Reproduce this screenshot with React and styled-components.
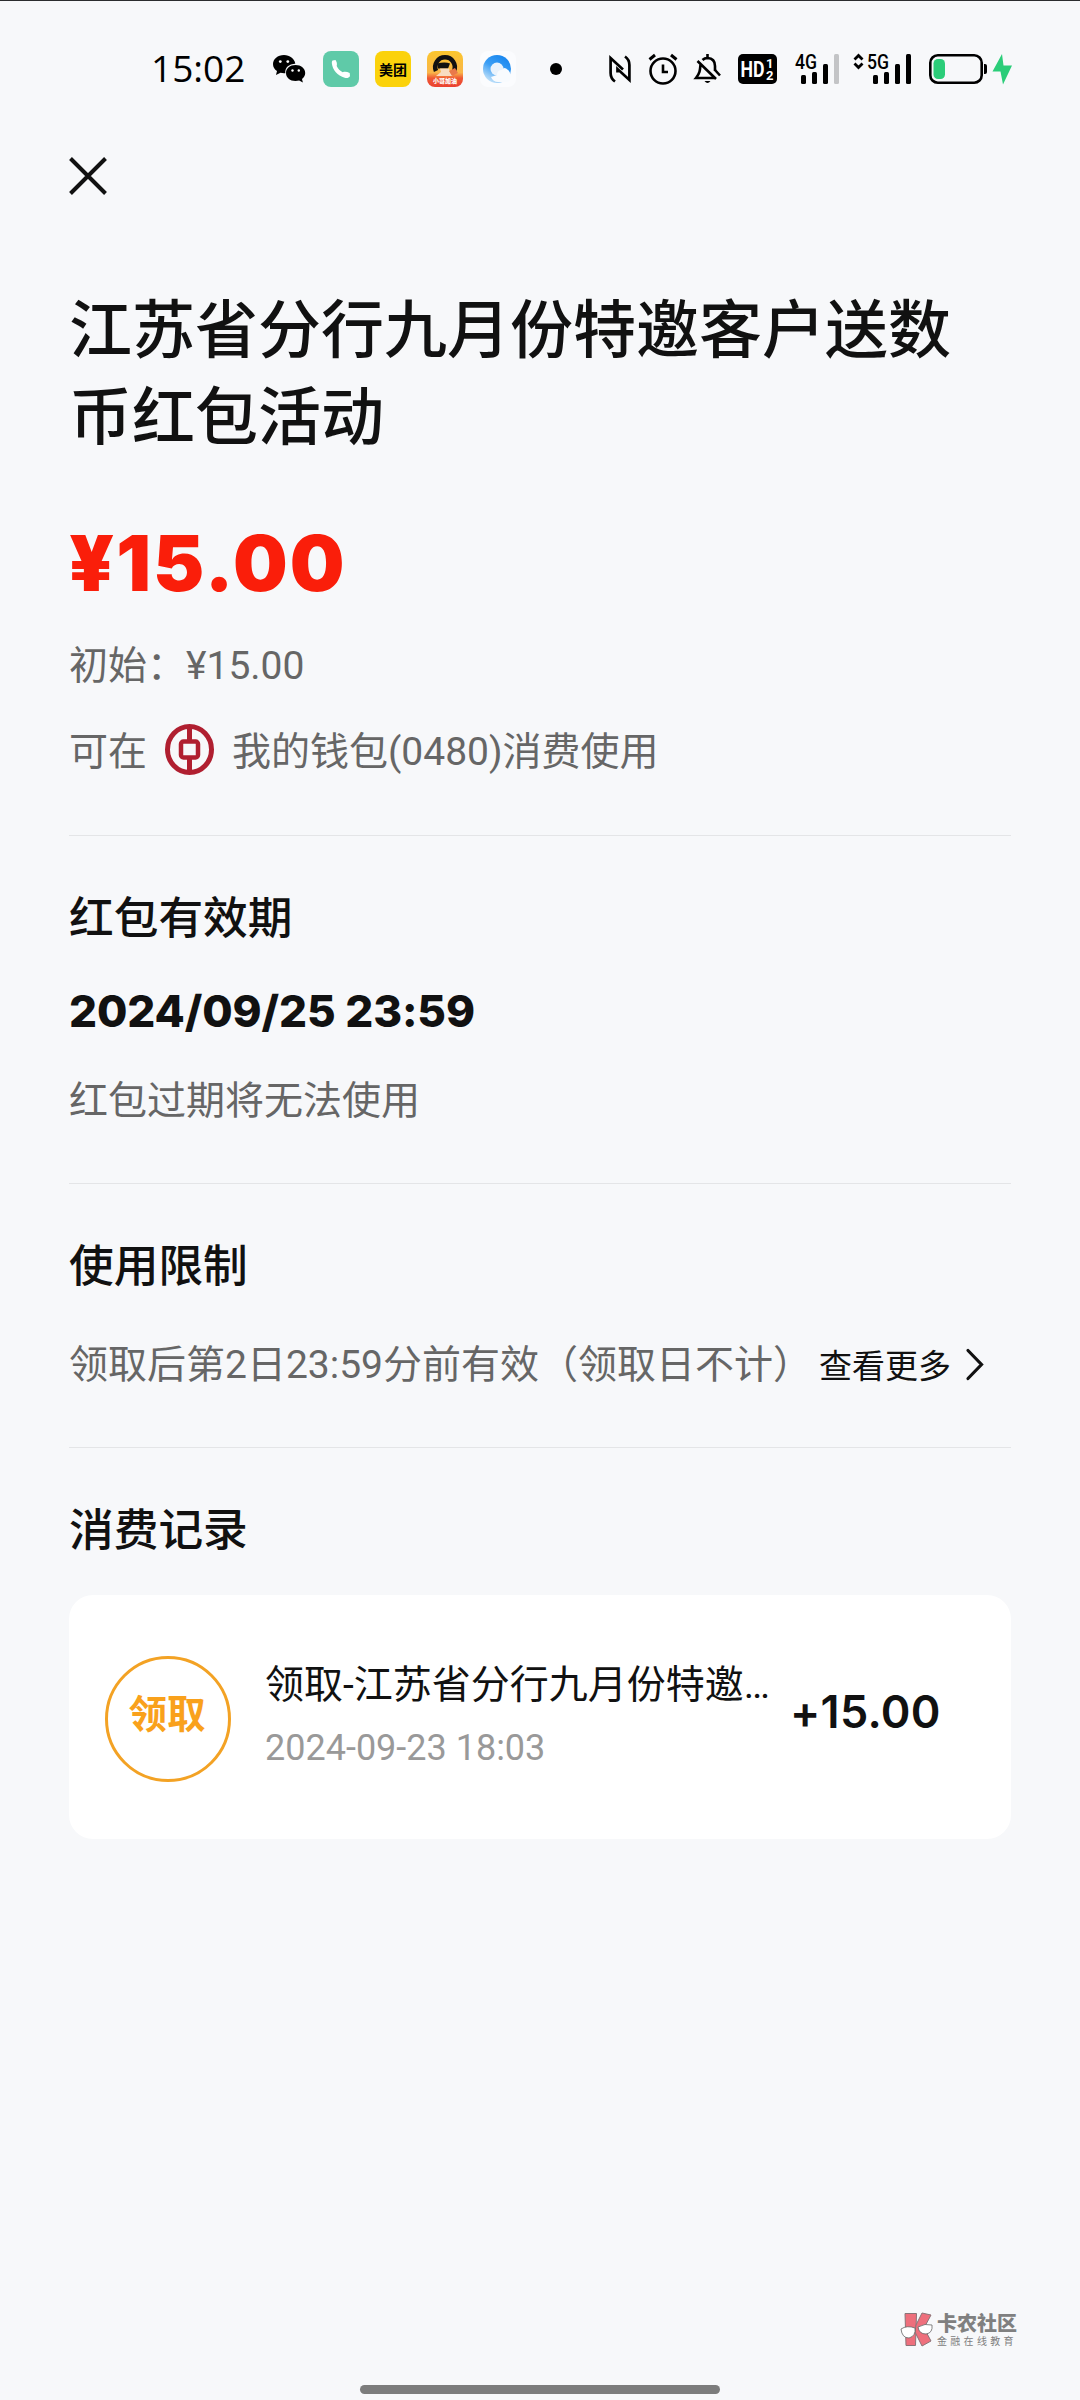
import styled, { createGlobalStyle } from 'styled-components';

const records = [
  {
    id: 1,
    tag: '领取',
    title: '领取-江苏省分行九月份特邀…',
    time: '2024-09-23 18:03',
    amount: '+15.00',
  },
];

const WechatIcon = () => (
  <Icon $left={26} width="34" height="30" viewBox="0 0 34 30">
    <path
      d="M12 1C5.600 1 1 5 1 10c0 3 1.500 5.400 4 7l-1 4 4.500-2.200c1.500.4 3 .5 4.800.4A9.500 8.500 0 0 1 23.300 9.700C22.500 4.600 17.800 1 12 1z"
      fill="#000"
    />
    <path
      d="M23.500 11C18 11 14 14.500 14 19s4 8 9.500 8c1.300 0 2.500-.2 3.600-.5l3.800 2-.9-3.600c2-1.400 3.200-3.500 3.200-5.900 0-4.500-4.200-8-9.700-8z"
      fill="#000"
    />
    <circle cx="8.300" cy="7.600" r="1.400" fill="#fff" />
    <circle cx="15.800" cy="7.600" r="1.400" fill="#fff" />
    <circle cx="20.500" cy="16.500" r="1.200" fill="#fff" />
    <circle cx="26.800" cy="16.500" r="1.200" fill="#fff" />
  </Icon>
);

const PhoneIcon = () => (
  <svg width="20" height="20" viewBox="0 0 20 20">
    <path
      d="M1.500 1.500 4.500 1c1.300 1.800 1.800 3.800 1.200 6 1.300 2.800 3.300 4.900 6 6.300 2-.8 4.200-.6 7 .7l.3 3c-1 2-3.200 2.500-5.300 1.800C6.500 16.500 1.500 11 .8 4c0-1.200.2-2 .7-2.500z"
      fill="#fff"
    />
  </svg>
);

const CourierIcon = () => (
  <Icon $left={16} width="36" height="36" viewBox="0 0 36 36">
    <defs>
      <linearGradient id="courier" x1="0" y1="0" x2="0" y2="1">
        <stop offset="0" stopColor="#fbc62c" />
        <stop offset="0.6" stopColor="#f9b54a" />
        <stop offset="0.75" stopColor="#ef5a34" />
        <stop offset="1" stopColor="#ea4030" />
      </linearGradient>
    </defs>
    <rect width="36" height="36" rx="8" fill="url(#courier)" />
    <path d="M9 20A9.800 9.800 0 1 1 27 20" fill="none" stroke="#111" strokeWidth="4.500" />
    <path d="M10 12.500q8-2 13 0l-2 5H11z" fill="#111" />
    <path d="M13 17.500h9l1 4 3 3.500H9l5-4z" fill="#f8dcc0" />
    <path d="m22 20 6-3 3 5-6 3z" fill="#e9794a" />
    <text x="18" y="32" fontSize="6" fontWeight="900" textAnchor="middle" fill="#fff">
      小哥加油
    </text>
  </Icon>
);

const BrowserIcon = () => (
  <Icon $left={17} width="36" height="36" viewBox="0 0 36 36">
    <defs>
      <linearGradient id="ring" x1="0.8" y1="0" x2="0.2" y2="1">
        <stop offset="0" stopColor="#1584ee" />
        <stop offset="0.5" stopColor="#3c9ff5" />
        <stop offset="1" stopColor="#d3eafa" />
      </linearGradient>
    </defs>
    <rect width="36" height="36" rx="8" fill="#fbfcfe" />
    <circle cx="17" cy="18" r="14" fill="url(#ring)" />
    <circle cx="17" cy="18" r="6.500" fill="#eaf3fc" />
    <path d="M17 24q0-5 5-5 2-4 6 0 3 2 2.500 7 0 5-4 5H18q-5 0-7-5z" fill="#f8fbfe" />
  </Icon>
);

const NfcIcon = () => (
  <Icon $left={47} width="22" height="28" viewBox="0 0 22 28" fill="none" stroke="#000" strokeWidth="2.700">
    <path d="M6 26.500Q1.600 23.500 1.600 18V3L14 14.500" />
    <path d="M16 1.500q4.400 3 4.400 8.500v15L8.500 14v3.500" />
  </Icon>
);

const AlarmIcon = () => (
  <Icon $left={17} width="30" height="32" viewBox="0 0 30 32" fill="none" stroke="#000" strokeWidth="2.600">
    <circle cx="15" cy="18" r="12.500" />
    <path d="M15 11.500V19h5" />
    <path d="m1.500 6.500 5.500-4.500M28.500 6.500 23 2" strokeWidth="3" />
  </Icon>
);

const MutedIcon = () => (
  <Icon $left={16} width="27" height="30" viewBox="0 0 27 30" fill="none" stroke="#000" strokeWidth="2.600">
    <path d="M8.500 6Q10.500 4 13.500 4q7.500.5 7.500 8v5M6.500 10.500c-.5 5.500-.5 8.500-4.500 13.500h18M3.500 7 22 25M13.500 0v4" />
    <path d="M10.500 27h6q-3 4-6 0z" fill="#000" stroke="none" />
    <path d="m21 16 5 5.500" />
  </Icon>
);

const HdIcon = () => (
  <Icon $left={17} width="39" height="30" viewBox="0 0 39 30">
    <rect width="39" height="30" rx="5" fill="#000" />
    <g fill="#fff" fontFamily="Roboto" fontWeight="700">
      <text x="2.500" y="22.500" fontSize="21.500" textLength="24" lengthAdjust="spacingAndGlyphs">
        HD
      </text>
      <text x="28" y="14" fontSize="13">
        1
      </text>
      <text x="28" y="25.500" fontSize="13">
        2
      </text>
    </g>
  </Icon>
);

const bars = [
  { x: 0, y: 21 },
  { x: 11, y: 18 },
  { x: 22, y: 10 },
  { x: 33, y: 0 },
];

const Signal = ({ label, strength, updown, left }) => (
  <Icon $left={left} width={updown ? 57 : 46} height="30" viewBox={updown ? '-19 0 57 30' : '-8 0 46 30'}>
    {updown && (
      <path
        d="m-18.500 5.500 4-4 4 4M-18.500 9.500l4 4 4-4"
        fill="none"
        stroke="#000"
        strokeWidth="2.800"
      />
    )}
    <text
      x="-6"
      y="14.500"
      fontSize="20"
      fontFamily="Roboto"
      fontWeight="500"
      textLength="22"
      lengthAdjust="spacingAndGlyphs"
    >
      {label}
    </text>
    {bars.map(({ x, y }, i) => (
      <rect
        key={x}
        x={x}
        y={y}
        width="5"
        height={30 - y}
        rx="1.500"
        fill={i < strength ? '#000' : '#c3c4c6'}
      />
    ))}
  </Icon>
);

const BatteryIcon = () => (
  <Icon $left={18} width="84" height="32" viewBox="0 0 84 32">
    <rect x="1.300" y="2.300" width="51.400" height="27.400" rx="7.500" fill="none" stroke="#000" strokeWidth="2.600" />
    <rect x="4.500" y="6" width="11.500" height="20" rx="4.500" fill="#2bcd79" />
    <path d="M55 11h1q2 0 2 2v6q0 2-2 2h-1z" />
    <path d="M73 1 63.500 18.500h8L74 31.500 83 12.500h-8.500z" fill="#2bcd79" />
  </Icon>
);

const BankLogo = () => (
  <svg width="49" height="51" viewBox="0 0 49 51" fill="none" stroke="#b01f30">
    <ellipse cx="24.500" cy="25.500" rx="22" ry="23" strokeWidth="5" />
    <rect x="16" y="17.500" width="17" height="16" rx="2.500" strokeWidth="4.500" />
    <path d="M24.500 4v13M24.500 34v13" strokeWidth="5" />
  </svg>
);

const CommunityLogo = () => (
  <svg width="34" height="36" viewBox="0 0 34 36">
    <g fill="#ee6f7c" stroke="#8b7478" strokeWidth="1">
      <path d="M5 1.500h11.500l-1 32H6z" />
      <path d="m22 1 9 2-7 13 7 13-9 5-7-14 1-7z" />
    </g>
    <g fill="#fff" stroke="#666" strokeWidth="0.800">
      <path d="M1 17q6-4 14-1 1 8-6 10-7 0-8-9z" />
      <path d="M18 15q7-4 14-2 1 8-6 9-7 0-8-7z" />
    </g>
  </svg>
);

const App = () => {
  return (
    <>
      <GlobalStyle />
      <Page>
        <StatusBar>
          <Clock>15:02</Clock>
          <WechatIcon />
          <AppTile $left={17} $color="#5fcaa8">
            <PhoneIcon />
          </AppTile>
          <AppTile $left={16} $color="#fbd20b">
            美团
          </AppTile>
          <CourierIcon />
          <BrowserIcon />
          <Dot />
          <NfcIcon />
          <AlarmIcon />
          <MutedIcon />
          <HdIcon />
          <Signal label="4G" strength={3} left={16} />
          <Signal label="5G" strength={4} left={15} updown />
          <BatteryIcon />
        </StatusBar>

        <Content>
          <CloseButton aria-label="关闭">
            <svg width="38" height="38" viewBox="0 0 38 38">
              <path d="m1.500 1.500 35 35M36.500 1.500l-35 35" stroke="#111" strokeWidth="4" />
            </svg>
          </CloseButton>

          <Title>江苏省分行九月份特邀客户送数币红包活动</Title>
          <Amount>¥15.00</Amount>
          <Text>初始：¥15.00</Text>
          <WalletRow>
            可在
            <BankLogo />
            我的钱包(0480)消费使用
          </WalletRow>

          <Section $height={348}>
            <Heading>红包有效期</Heading>
            <Expiry>2024/09/25 23:59</Expiry>
            <Text>红包过期将无法使用</Text>
          </Section>

          <Section $height={264}>
            <Heading>使用限制</Heading>
            <LimitRow>
              <Text>领取后第2日23:59分前有效（领取日不计）</Text>
              <MoreLink>
                <span>查看更多</span>
                <svg width="20" height="34" viewBox="0 0 20 34">
                  <path d="m3 2.500 13.500 14L3 30.500" fill="none" stroke="#111" strokeWidth="3.200" strokeLinecap="round" />
                </svg>
              </MoreLink>
            </LimitRow>
          </Section>

          <Section>
            <Heading>消费记录</Heading>
            {records.map(({ id, tag, title, time, amount }) => (
              <Record key={id}>
                <Badge>{tag}</Badge>
                <RecordInfo>
                  <RecordTitle>{title}</RecordTitle>
                  <RecordTime>{time}</RecordTime>
                </RecordInfo>
                <RecordAmount>{amount}</RecordAmount>
              </Record>
            ))}
          </Section>
        </Content>

        <Watermark>
          <CommunityLogo />
          <div>
            <BrandName>卡农社区</BrandName>
            <BrandSlogan>金融在线教育</BrandSlogan>
          </div>
        </Watermark>
        <HomeIndicator />
      </Page>
    </>
  );
};

export default App;

const GlobalStyle = createGlobalStyle`
  * {
    box-sizing: border-box;
  }

  body {
    margin: 0;
    background: #f7f8fa;
  }
`;

const Page = styled.div`
  display: flex;
  flex-direction: column;
  width: 1080px;
  height: 2400px;
  border-top: 1px solid #2b2c2e;
  overflow: hidden;
  background: #f7f8fa;
  color: #111;
  font-family: Roboto, 'Noto Sans CJK SC', sans-serif;
`;

const StatusBar = styled.div`
  display: flex;
  align-items: center;
  height: 135px;
  padding-left: 151px;
`;

const Icon = styled.svg`
  flex: none;
  margin-left: ${({ $left }) => $left}px;
  overflow: visible;
`;

const Clock = styled.div`
  width: 95px;
  padding-bottom: 2px;
  color: #000;
  font-family: 'Open Sans', sans-serif;
  font-size: 37px;
  line-height: 40px;
`;

const AppTile = styled.div`
  display: flex;
  flex: none;
  align-items: center;
  justify-content: center;
  width: 36px;
  height: 36px;
  margin-left: ${({ $left }) => $left}px;
  border-radius: 8px;
  background: ${({ $color }) => $color};
  color: #000;
  font-size: 14px;
  font-weight: 700;
`;

const Dot = styled.div`
  width: 12px;
  height: 12px;
  margin-left: 34px;
  border-radius: 50%;
  background: #000;
`;

const Content = styled.main`
  display: flex;
  flex: 1;
  flex-direction: column;
  padding: 0 69px;
`;

const CloseButton = styled.button`
  display: flex;
  width: 38px;
  height: 38px;
  margin-top: 21px;
  padding: 0;
  border: 0;
  background: none;
`;

const Title = styled.h1`
  margin: 92px 0 0;
  font-size: 63px;
  font-weight: 500;
  line-height: 87px;
`;

const Amount = styled.div`
  height: 118px;
  margin-top: 57px;
  color: #fa1e0a;
  font-family: Inter, sans-serif;
  font-size: 77px;
  font-weight: 900;
  letter-spacing: 2px;
  line-height: 90px;
`;

const Text = styled.p`
  margin: 0;
  color: #666;
  font-size: 39px;
  line-height: 60px;
  white-space: nowrap;
`;

const WalletRow = styled(Text)`
  display: flex;
  align-items: center;
  gap: 18px;
  height: 60px;
  margin: 26px 0 53px;

  svg {
    margin-bottom: 5px;
  }
`;

const Section = styled.section`
  height: ${({ $height }) => ($height ? `${$height}px` : 'auto')};
  padding-top: 51px;
  border-top: 1px solid #e4e5e7;
`;

const Heading = styled.h2`
  margin: 0;
  font-size: 44.700px;
  font-weight: 500;
  line-height: 64px;
`;

const Expiry = styled.div`
  margin: 28px 0 28px;
  font-family: Inter, sans-serif;
  font-size: 44px;
  font-weight: 800;
  letter-spacing: -0.100px;
  line-height: 64px;
`;

const LimitRow = styled.div`
  display: flex;
  align-items: center;
  margin-top: 34px;
`;

const MoreLink = styled.a`
  display: flex;
  align-items: center;
  gap: 14px;
  margin-left: 7px;
  font-size: 33px;
  line-height: 60px;
  white-space: nowrap;

  span {
    padding-top: 4px;
  }
`;

const Record = styled.div`
  display: flex;
  align-items: center;
  height: 244px;
  margin-top: 32px;
  padding-left: 36px;
  border-radius: 24px;
  background: #fff;
`;

const Badge = styled.div`
  flex: none;
  width: 126px;
  height: 126px;
  margin-top: 3px;
  border: 3px solid #f3a224;
  border-radius: 50%;
  color: #f9a11b;
  font-size: 38.500px;
  font-weight: 700;
  line-height: 112px;
  text-align: center;
  text-indent: -2px;
`;

const RecordInfo = styled.div`
  flex: none;
  width: 510px;
  margin: 0 0 2px 34px;
`;

const RecordTitle = styled.div`
  font-size: 39px;
  line-height: 60px;
  white-space: nowrap;
`;

const RecordTime = styled.div`
  margin-top: 3px;
  color: #999;
  font-size: 36px;
  line-height: 60px;
`;

const RecordAmount = styled.div`
  margin: 0 0 12px 15px;
  font-family: Inter, sans-serif;
  font-size: 45px;
  font-weight: 600;
  letter-spacing: 0.300px;
`;

const Watermark = styled.footer`
  display: flex;
  align-items: center;
  align-self: flex-end;
  gap: 3px;
  height: 36px;
  margin-right: 63px;
  color: #808080;
`;

const BrandName = styled.div`
  padding-top: 1px;
  font-size: 20px;
  font-weight: 900;
  line-height: 20px;
`;

const BrandSlogan = styled.div`
  margin-top: 2px;
  font-size: 10px;
  letter-spacing: 3.300px;
  line-height: 12px;
`;

const HomeIndicator = styled.div`
  align-self: center;
  width: 360px;
  height: 9px;
  margin: 37px 0 6px;
  border-radius: 5px;
  background: #7c7c7c;
`;
